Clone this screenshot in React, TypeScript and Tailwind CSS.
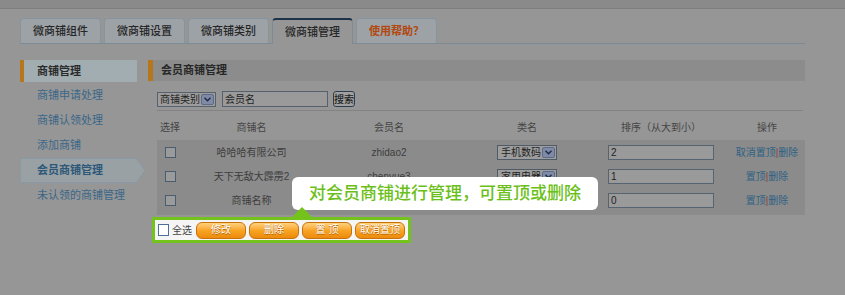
import React from 'react';

const tabs = ['微商铺组件', '微商铺设置', '微商铺类别', '微商铺管理', '使用帮助？'];
const sideLinks = ['商铺申请处理', '商铺认领处理', '添加商铺', '会员商铺管理', '未认领的商铺管理'];

interface ShopRow {
  name: string;
  member: string;
  category: string;
  order: string;
  pinned: boolean;
}

// last row sits under the guide tooltip, so its hidden cells stay empty
const rows: ShopRow[] = [
  { name: '哈哈哈有限公司', member: 'zhidao2', category: '手机数码', order: '2', pinned: true },
  { name: '天下无敌大霹雳2', member: 'chenyue3', category: '家用电器', order: '1', pinned: false },
  { name: '商铺名称', member: '', category: '', order: '0', pinned: false },
];

function Chevron() {
  return (
    <span className="flex h-[11px] w-[13px] items-center justify-center rounded-[2px] border border-[#5e6b86] bg-[#7f8ba6]">
      <svg width="7" height="5" viewBox="0 0 7 5">
        <path d="M0.5 0.8 L3.5 3.8 L6.5 0.8" fill="none" stroke="#1d2a44" strokeWidth="1.4" />
      </svg>
    </span>
  );
}

function Box() {
  return <span className="block h-[11px] w-[11px] border border-[#4a5d70] bg-[#9b9b9b]" />;
}

function ActionBtn({ label }: { label: string }) {
  return (
    <button className="flex h-[17px] w-[50px] items-center justify-center rounded-[6px] border border-[#c8720a] bg-gradient-to-b from-[#ffd27a] via-[#f8a423] to-[#ec8a0c] text-[10px] leading-none text-white [text-shadow:0_1px_0_#b35f00]">
      {label}
    </button>
  );
}

export default function App() {
  return (
    <div className="relative h-[295px] w-[845px] overflow-hidden bg-[#969696] font-['Liberation_Sans','Noto_Sans_CJK_SC',sans-serif] text-[#3d3d3d]">
      <div className="h-[9px] border-b border-[#7e7e7e] bg-[#8a8a8a]" />

      {/* tabs */}
      <div className="ml-[20px] mt-[9px] flex h-[26px] w-[785px] items-end gap-[3px] border-b border-[#7c8b95]">
        {tabs.map((t, i) => (
          <div
            key={t}
            className={
              i === 3
                ? 'relative -mb-px flex h-[26px] w-[81px] items-center justify-center rounded-t-[4px] border border-b-0 border-[#7c8b95] border-t-2 border-t-[#1e3347] bg-[#969696] text-[11px] font-medium text-[#262626]'
                : i === 4
                ? 'flex h-[25px] w-[81px] items-center justify-center rounded-t-[4px] border border-b-0 border-[#8494a0] bg-[#9da2a6] text-[11px] font-bold text-[#b2480f]'
                : 'flex h-[25px] w-[81px] items-center justify-center rounded-t-[4px] border border-b-0 border-[#8494a0] bg-[#9da2a6] text-[11px] font-medium text-[#262626]'
            }
          >
            {t}
          </div>
        ))}
      </div>

      <div className="mt-[16px] flex pl-[20px]">
        {/* sidebar */}
        <div className="w-[117px]">
          <div className="flex h-[22px] items-center border-l-4 border-[#b6761c] bg-[#a2adb2] pl-[13px] text-[11px] font-bold text-[#2b2b2b]">
            商铺管理
          </div>
          <div className="pt-[1px]">
            {sideLinks.map((s, i) =>
              i === 3 ? (
                <div key={s} className="relative flex h-[25px] items-center pl-[17px] text-[11px] font-bold text-[#2d5878]">
                  <svg className="absolute left-0 top-0" width="126" height="25" viewBox="0 0 126 25">
                    <polygon points="0.5,0.5 116.5,0.5 125,12.5 116.5,24.5 0.5,24.5" fill="#9aa1a5" stroke="#8799a6" />
                  </svg>
                  <span className="relative">{s}</span>
                </div>
              ) : (
                <div key={s} className="flex h-[25px] items-center pl-[17px] text-[11px] text-[#3b6788]">
                  {s}
                </div>
              )
            )}
          </div>
        </div>

        {/* main */}
        <div className="ml-[11px] w-[657px]">
          <div className="flex h-[21px] items-center border-l-[5px] border-[#b6761c] bg-[#8c8c8c] pl-[8px] text-[11px] font-bold text-[#262626]">
            会员商铺管理
          </div>

          <div className="ml-[9px] mt-[10px] flex h-[16px] items-center text-[10px] text-[#1f1f1f]">
            <div className="flex h-[15px] w-[59px] items-center justify-between border border-[#55616c] bg-[#9c9c9c] pl-[2px] pr-[1px]">
              商铺类别
              <Chevron />
            </div>
            <div className="ml-[6px] flex h-[16px] w-[106px] items-center border border-[#55616c] bg-[#9a9a9a] pl-[2px]">
              会员名
            </div>
            <div className="ml-[5px] flex h-[16px] w-[22px] items-center justify-center rounded-[3px] border border-[#2f3e4e] bg-[#a0a0a0] font-medium">
              搜索
            </div>
          </div>

          <div className="ml-[9px] mt-[3px] w-[646px] border-t border-[#838383]" />

          {/* table */}
          <div className="ml-[9px] flex h-[29px] items-center pt-[4px] text-[10px] text-[#444]">
            <div className="w-[43px] pl-[3px]">选择</div>
            <div className="w-[103px] text-center">商铺名</div>
            <div className="w-[172px] text-center">会员名</div>
            <div className="w-[104px] text-center">类名</div>
            <div className="w-[164px] text-center">排序（从大到小）</div>
            <div className="flex w-[48px] justify-center whitespace-nowrap">操作</div>
          </div>

          <div className="ml-[9px] w-[648px] bg-[#8b8b8b] pb-[3px] text-[10px] text-[#3d3d3d]">
            {rows.map((r) => (
              <div key={r.name} className="flex h-[24px] items-center">
                <div className="w-[43px] pl-[8px]">
                  <Box />
                </div>
                <div className="w-[103px] whitespace-nowrap text-center">{r.name}</div>
                <div className="w-[172px] text-center">{r.member}</div>
                <div className="flex w-[104px] justify-center">
                  <div className="flex h-[15px] w-[60px] items-center justify-between border border-[#4f5b66] bg-[#9d9d9d] pl-[3px] pr-[1px] text-[#1f1f1f]">
                    {r.category}
                    <Chevron />
                  </div>
                </div>
                <div className="flex w-[164px] justify-center">
                  <div className="flex h-[15px] w-[106px] items-center border border-[#566472] bg-[#9a9a9a] pl-[2px] text-[#1f1f1f]">
                    {r.order}
                  </div>
                </div>
                <div className="flex w-[48px] justify-center whitespace-nowrap text-[#2f6283]">
                  {r.pinned ? '取消置顶' : '置顶'}
                  <span className="text-[#8e3b3b]">|</span>
                  删除
                </div>
              </div>
            ))}
          </div>

          {/* highlighted batch bar */}
          <div className="relative z-10 ml-[4px] mt-[2px] inline-flex h-[26px] items-center gap-[3px] border-[3px] border-[#74c21c] bg-[#f5f5f5] pl-[3px] pr-[3px] text-[10px] text-[#444]">
            <span className="block h-[12px] w-[11px] border border-[#4d6f9c] bg-white" />
            <span className="mr-[1px]">全选</span>
            <ActionBtn label="修改" />
            <ActionBtn label="删除" />
            <ActionBtn label="置 顶" />
            <ActionBtn label="取消置顶" />
          </div>
        </div>
      </div>

      {/* guide tooltip */}
      <div className="absolute left-[292px] top-[177px] z-20 flex h-[33px] w-[306px] items-center justify-center rounded-[6px] bg-white text-[17px] font-medium text-[#6cbf1a]">
        对会员商铺进行管理，可置顶或删除
      </div>
      <div className="absolute left-[291px] top-[207px] z-20 h-0 w-0 border-b-[11px] border-l-[11px] border-r-[11px] border-b-[#74c21c] border-l-transparent border-r-transparent" />
    </div>
  );
}
